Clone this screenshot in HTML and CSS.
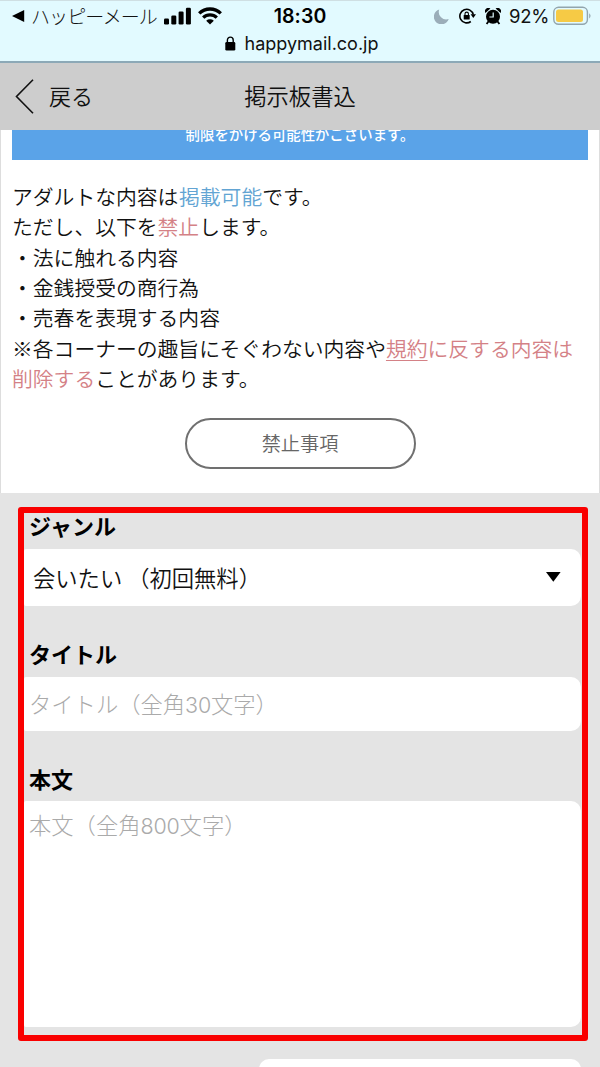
FILE: index.html
```html
<!DOCTYPE html>
<html lang="ja">
<head>
<meta charset="utf-8">
<title>掲示板書込</title>
<link rel="stylesheet" href="styles.css">
</head>
<body>
<div class="screen">
  <div class="browser-bar">
    <div class="status">
      <div class="status-left">
        <svg class="back-app" width="13" height="12" viewBox="0 0 13 12"><path d="M0 6 12.2 0v12z"/></svg>
        <span class="app-name">ハッピーメール</span>
        <svg class="signal" width="28" height="18" viewBox="0 0 28 18"><rect x="0" y="11.5" width="5" height="6" rx="1.3"/><rect x="7.3" y="8.5" width="5" height="9" rx="1.3"/><rect x="14.6" y="4.5" width="5" height="13" rx="1.3"/><rect x="21.9" y="0.8" width="5" height="16.7" rx="1.3"/></svg>
        <svg class="wifi" width="24" height="18" viewBox="0 0 24 18"><g fill="none" stroke="#000" stroke-width="3.3"><path d="M1.2 6.4a15.4 15.4 0 0 1 21.6 0"/><path d="M5.2 10.6a9.8 9.8 0 0 1 13.6 0"/></g><path d="M12 17.5 8.2 13.7a5.6 5.6 0 0 1 7.6 0z"/></svg>
      </div>
      <div class="clock">18:30</div>
      <div class="status-right">
        <svg class="moon" width="15" height="15" viewBox="0 0 15 15"><path d="M5.2.5A7.6 7.6 0 1 0 14.7 10 7.5 7.5 0 0 1 5.2.5z" fill="#9badb9"/></svg>
        <svg class="rotate" width="17" height="16" viewBox="0 0 17 16"><path d="M11.8 13.5A6.8 6.8 0 1 1 14.3 6.6" fill="none" stroke="#000" stroke-width="1.6"/><path d="M11.6 6.2H17L14.3 10z"/><rect x="4.7" y="7" width="6" height="4.6" rx=".6"/><path d="M6 7.4V5.8a1.7 1.7 0 0 1 3.4 0v1.6" fill="none" stroke="#000" stroke-width="1.1"/></svg>
        <svg class="alarm" width="16" height="17" viewBox="0 0 16 17"><circle cx="8" cy="8.7" r="7"/><path d="M.4 5A3.4 3.4 0 0 1 5.4.6zM15.6 5A3.4 3.4 0 0 0 10.6.6z"/><path d="M3.6 13.2 1.6 16M12.4 13.2l2 2.8" stroke="#000" stroke-width="1.8"/><path d="M8.2 4.5V9H4.4" fill="none" stroke="#e2faff" stroke-width="1.2"/></svg>
        <span class="percent">92%</span>
        <svg class="battery" width="39" height="20" viewBox="0 0 39 20"><rect x=".8" y="1.3" width="33.6" height="17" rx="4.8" fill="none" stroke="#92a5ad" stroke-width="1.4"/><rect x="3" y="3.5" width="27" height="12.6" rx="2.5" fill="#f6ca45"/><path d="M36.2 7.2q2.7 2.6 0 5.2z" fill="#92a5ad"/></svg>
      </div>
    </div>
    <div class="address">
      <svg width="11" height="15" viewBox="0 0 11 15"><rect x=".3" y="6" width="10" height="8.6" rx="1.3"/><path d="M2.4 6.5V4a2.9 2.9 0 0 1 5.8 0v2.5" fill="none" stroke="#000" stroke-width="1.4"/></svg>
      <span>happymail.co.jp</span>
    </div>
  </div>

  <header class="nav">
    <a class="nav-back"><svg width="19" height="35" viewBox="0 0 19 35"><path d="M18 .8 1.5 17.5 18 34.2" fill="none" stroke="#111" stroke-width="1.6"/></svg><span>戻る</span></a>
    <h1>掲示板書込</h1>
    <span></span>
  </header>

  <div class="notice"><span>制限をかける可能性がございます。</span></div>

  <section class="rules">
    <p class="allowed">アダルトな内容は <em class="ok">掲載可能</em>です。</p>
    <p>ただし、以下を<em class="ng">禁止</em>します。</p>
    <p>・法に触れる内容</p>
    <p>・金銭授受の商行為</p>
    <p>・売春を表現する内容</p>
    <p>※各コーナーの趣旨にそぐわない内容や<em class="ng"><u>規約</u>に反する内容は</em></p>
    <p><em class="ng">削除する</em>ことがあります。</p>
    <a class="pill">禁止事項</a>
  </section>

  <section class="form">
    <div class="highlight">
      <div class="label genre-label">ジャンル</div>
      <div class="field select"><span>会いたい （初回無料）</span><svg width="15" height="10" viewBox="0 0 15 10"><path d="M0 0h14.6L7.3 9.8z"/></svg></div>
      <div class="label title-label">タイトル</div>
      <div class="field title-input">タイトル（全角<span class="num">30</span>文字）</div>
      <div class="label body-label">本文</div>
      <div class="field body-input">本文（全角<span class="num">800</span>文字）</div>
    </div>
    <div class="next-field"></div>
  </section>
</div>
</body>
</html>
```
FILE: styles.css
```css
* { box-sizing: border-box; }
body {
  margin: 0;
  font-family: "Noto Sans CJK JP", sans-serif;
  font-weight: 350;
  color: #111;
}
.screen {
  display: flex;
  flex-direction: column;
  width: 600px;
  height: 1067px;
  overflow: hidden;
  background: #fff;
  box-shadow: inset 0 0 0 1px #ddd;
}
svg { display: block; flex: none; }

.browser-bar {
  flex: none;
  height: 63px;
  padding-top: 2px;
  background: #e2faff;
  border-top: 1px solid #cfdfe3;
  border-bottom: 2px solid #8ca9b7;
}
.status {
  display: grid;
  grid-template-columns: 260px 80px 260px;
  height: 26px;
}
.status-left, .status-right { display: flex; align-items: center; white-space: nowrap; }
.status-left { padding-left: 12px; }
.app-name { width: 128px; margin-left: 6px; font-size: 19px; font-weight: 300; line-height: 26px; letter-spacing: -0.9px; }
.signal { margin-left: 5px; }
.wifi { margin-left: 6px; }
.clock {
  font: 600 19.5px/26px Inter, sans-serif;
  text-align: center;
  letter-spacing: 0.1px;
  color: #000;
}
.status-right { justify-content: flex-end; padding-right: 8px; }
.rotate { margin-left: 10px; }
.alarm { margin-left: 9px; }
.percent { width: 41px; margin-left: 8px; font: 400 18.5px/26px Inter, sans-serif; letter-spacing: -0.2px; }
.battery { margin-left: 3px; }
.address {
  display: flex;
  justify-content: center;
  align-items: center;
  gap: 9px;
  height: 29px;
  padding-left: 3px;
  font: 400 18px/29px Inter, sans-serif;
}

.nav {
  flex: none;
  display: grid;
  grid-template-columns: 150px 300px 150px;
  align-items: center;
  height: 67px;
  background: #cdcdcd;
}
.nav-back { display: flex; align-items: center; gap: 15px; padding-left: 15px; font-size: 22px; line-height: 34px; }
.nav-back span, .nav h1 { padding-bottom: 4px; }
.nav h1 { margin: 0; text-align: center; font-size: 22.3px; font-weight: 350; line-height: 34px; }

.notice {
  flex: none;
  height: 30px;
  margin: 0 12px;
  overflow: hidden;
  background: #5aa3e8;
  color: #fff;
  font-size: 14.4px;
  font-weight: 500;
  line-height: 20px;
  text-align: center;
}
.notice span { display: block; margin-top: -6px; }

.rules {
  flex: none;
  height: 333px;
  padding: 21px 12px 0;
  font-size: 20.8px;
  line-height: 30.35px;
  white-space: nowrap;
}
.rules p { margin: 0; }
.rules em { font-style: normal; }
.allowed { word-spacing: -4px; }
.ok { color: #62a4d3; }
.ng { color: #d48186; }
.rules u { text-underline-offset: 3px; text-decoration-thickness: 1px; }
.pill {
  display: block;
  width: 231px;
  height: 51px;
  margin: 25px auto 0;
  border: 2px solid #707070;
  border-radius: 26px;
  color: #666;
  font-size: 19.2px;
  line-height: 46px;
  text-align: center;
}

.form { flex: 1; padding: 14px 12px 0 18px; background: #e4e4e4; box-shadow: inset 0 -1px #d0d0d0; }
.highlight {
  height: 534px;
  border: 6px solid #f90000;
  border-radius: 3px;
}
.label { padding-left: 5px; color: #000; font-size: 22px; font-weight: 700; line-height: 28px; }
.field { margin-right: 1px; border-radius: 2px 10px 10px 2px; background: #fff; font-size: 22.3px; }
.genre-label { height: 36px; line-height: 25px; }
.select {
  display: flex;
  align-items: center;
  justify-content: space-between;
  height: 57px;
  padding: 0 20px 2px 9px;
}
.title-label { height: 71px; padding-top: 33px; }
.title-input { height: 54px; padding-left: 5px; color: #aaa; font-weight: 300; line-height: 52px; }
.body-label { height: 70px; padding-top: 33px; }
.body-input { height: 226px; padding: 7px 5px; color: #aaa; font-weight: 300; line-height: 33px; }
.num { font-family: Inter, sans-serif; font-size: 21.5px; letter-spacing: -0.2px; }
.next-field { height: 20px; margin: 18px 7px 0 241px; border-radius: 10px; background: #fff; }
```
